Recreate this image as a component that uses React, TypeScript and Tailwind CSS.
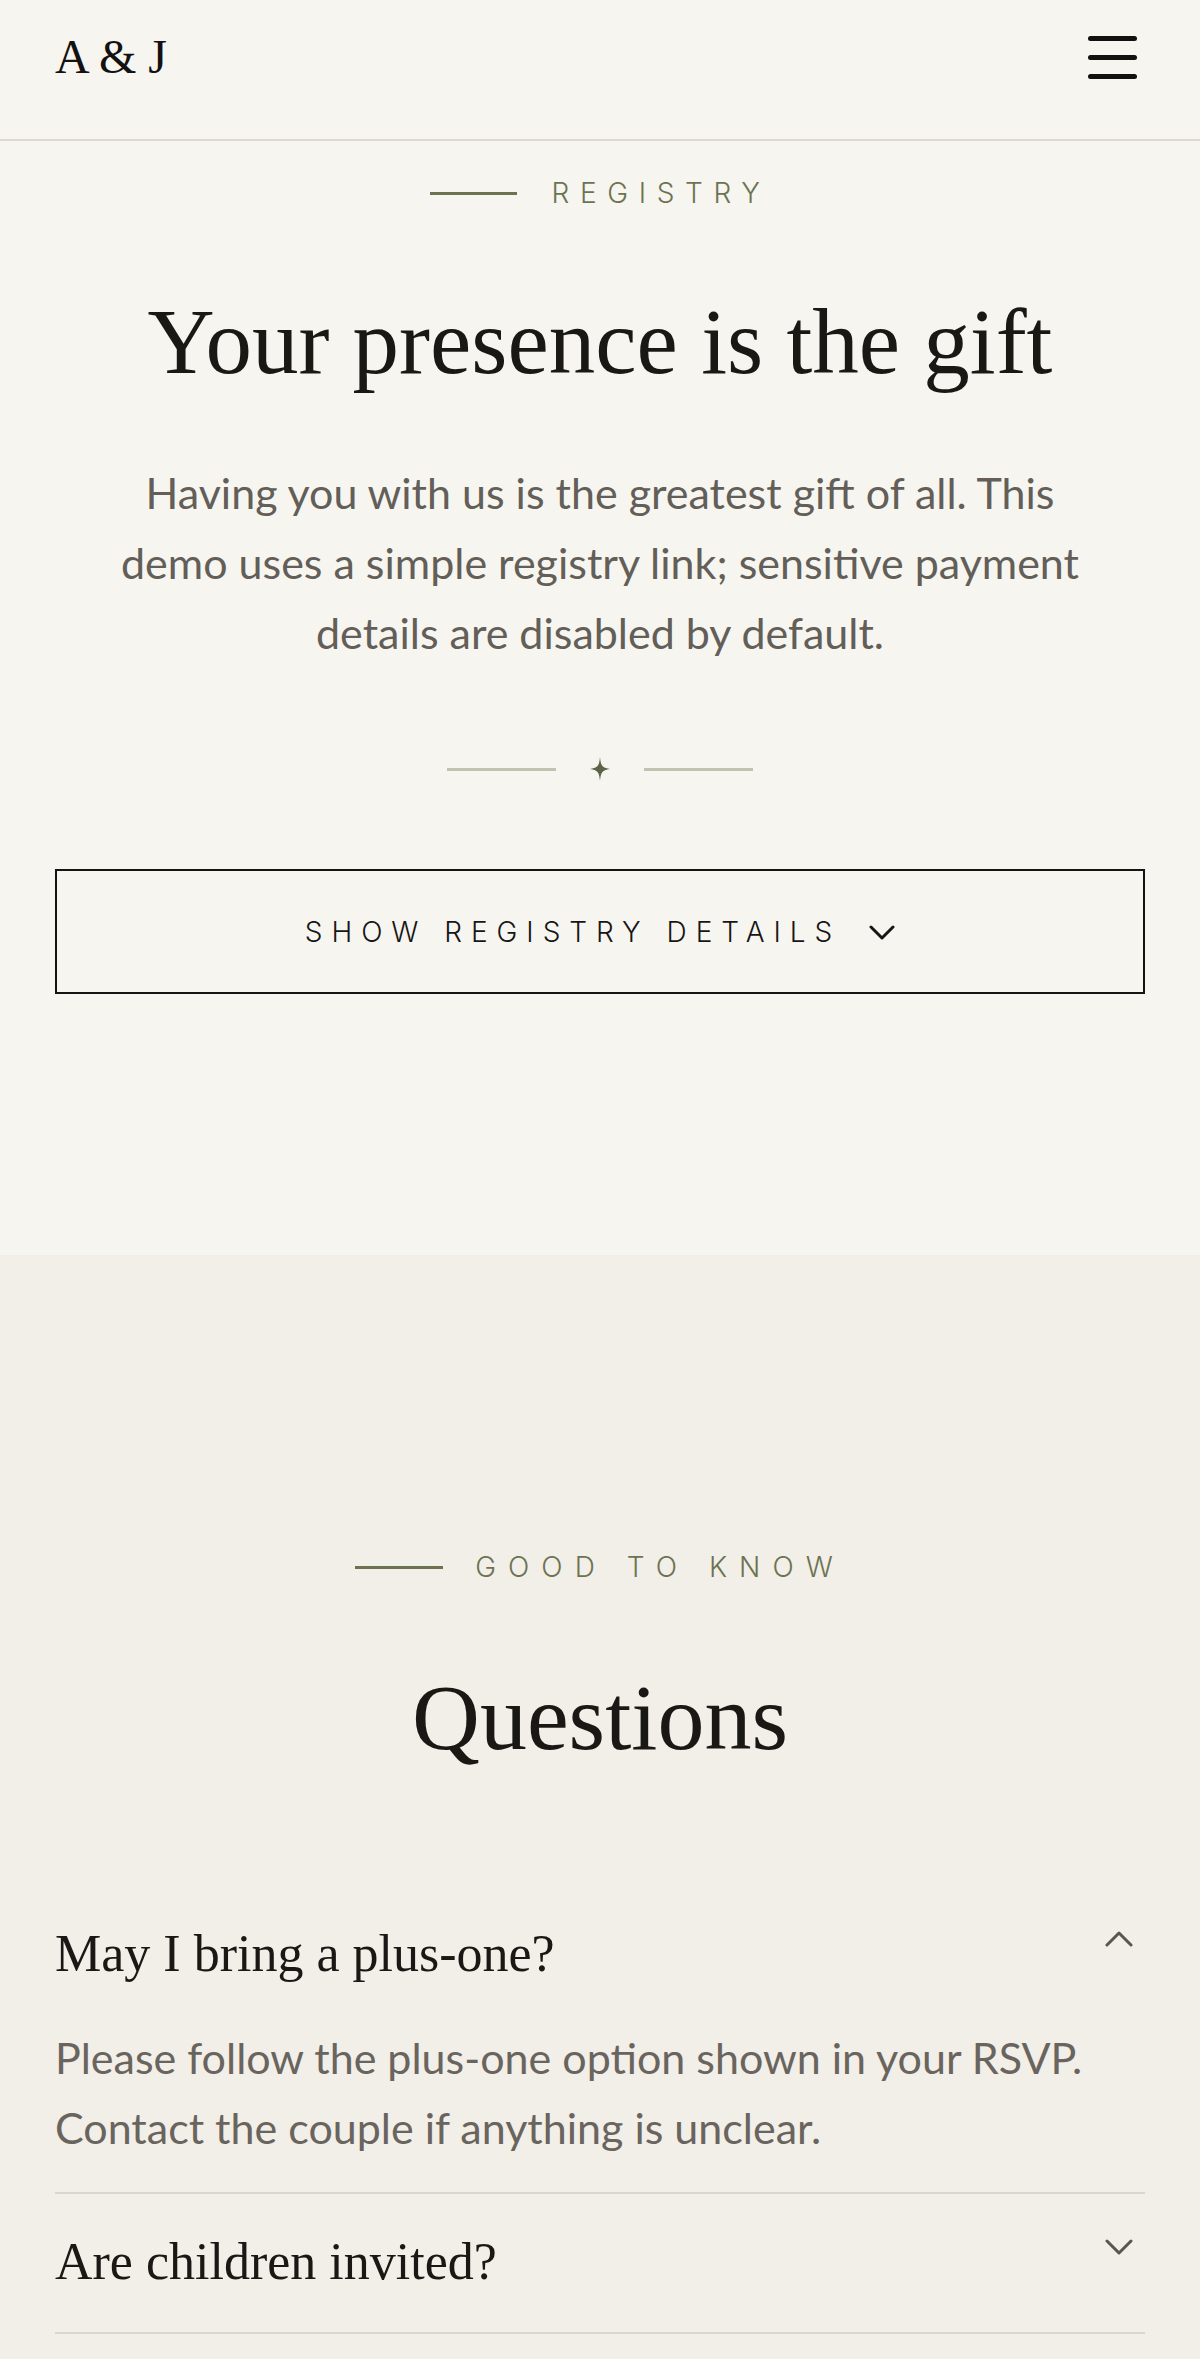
import React, { useState } from 'react';

interface FaqItem {
  question: string;
  answer: string;
}

const faqs: FaqItem[] = [
  {
    question: 'May I bring a plus-one?',
    answer: 'Please follow the plus-one option shown in your RSVP. Contact the couple if anything is unclear.'
  },
  {
    question: 'Are children invited?',
    answer: 'Please check your invitation for the names included in your party.'
  }
];

function Eyebrow({ label, lineWidth, gap, tracking }: { label: string; lineWidth: string; gap: string; tracking: string }) {
  return (
    <div className={`flex items-center justify-center ${gap}`}>
      <span className={`block h-[3px] ${lineWidth} bg-[#6c7351]`} />
      <span className={`font-['Inter',sans-serif] text-[28px] font-light leading-none ${tracking} text-[#6c7351]`}>
        {label}
      </span>
    </div>
  );
}

function Chevron({ up, className }: { up?: boolean; className?: string }) {
  return (
    <svg width="28" height="16" viewBox="0 0 28 16" fill="none" className={className}>
      <path
        d={up ? 'M2 14L14 2l12 12' : 'M2 2l12 12L26 2'}
        stroke="currentColor"
        strokeWidth="3"
        strokeLinecap="round"
        strokeLinejoin="round"
      />
    </svg>
  );
}

export default function App() {
  const [open, setOpen] = useState<number | null>(0);
  const [showDetails, setShowDetails] = useState(false);

  return (
    <div className="min-h-screen bg-[#f2eee8]">
      {/* Header */}
      <header className="h-[141px] border-b-2 border-[#dcd8cf] bg-[#f6f5f0] px-[55px]">
        <div className="flex h-[114px] items-center justify-between">
          <span className="font-['Liberation_Serif',serif] text-[48px] leading-none text-[#141210]">A &amp; J</span>
          <button aria-label="Menu" className="mr-[8px] flex w-[49px] flex-col gap-[14px]">
            <span className="block h-[5px] w-full rounded-full bg-[#111]" />
            <span className="block h-[5px] w-full rounded-full bg-[#111]" />
            <span className="block h-[5px] w-full rounded-full bg-[#111]" />
          </button>
        </div>
      </header>

      {/* Registry */}
      <section className="bg-[#f6f5f0] px-[55px] pt-[38px] pb-[261px]">
        <Eyebrow label="REGISTRY" lineWidth="w-[87px]" gap="gap-[35px]" tracking="tracking-[0.38em]" />
        <h2 className="mt-[88px] text-center font-['Liberation_Serif',serif] text-[93px] font-normal leading-none text-[#1a1815]">
          Your presence is the gift
        </h2>
        <p className="mx-auto mt-[70px] max-w-[990px] text-center font-['Lato',sans-serif] text-[43px] leading-[70px] text-[#635e58]">
          Having you with us is the greatest gift of all. This demo uses a simple registry link; sensitive payment
          details are disabled by default.
        </p>

        {/* Ornament */}
        <div className="mt-[89px] flex items-center justify-center gap-[34px]">
          <span className="block h-[3px] w-[109px] bg-[#c0c4ae]" />
          <svg width="20" height="24" viewBox="0 0 20 24" className="text-[#5b6445]">
            <path d="M10 0C10.8 8 11.5 10.8 20 12C11.5 13.2 10.8 16 10 24C9.2 16 8.5 13.2 0 12C8.5 10.8 9.2 8 10 0Z" fill="currentColor" />
          </svg>
          <span className="block h-[3px] w-[109px] bg-[#c0c4ae]" />
        </div>

        <button
          onClick={() => setShowDetails(!showDetails)}
          className="mt-[88px] flex h-[125px] w-full items-center justify-center gap-[28px] border-2 border-[#141414] text-[#161616]"
        >
          <span className="font-['Inter',sans-serif] text-[28px] font-light leading-none tracking-[0.32em]">
            SHOW REGISTRY DETAILS
          </span>
          <svg width="26" height="16" viewBox="0 0 26 16" fill="none">
            <path
              d={showDetails ? 'M2 13L13 2l11 11' : 'M2 3l11 11L24 3'}
              stroke="currentColor"
              strokeWidth="3"
              strokeLinecap="round"
              strokeLinejoin="round"
            />
          </svg>
        </button>
      </section>

      {/* FAQ */}
      <section className="bg-[#f2eee8] px-[55px] pt-[298px] pb-[80px]">
        <Eyebrow label="GOOD TO KNOW" lineWidth="w-[88px]" gap="gap-[32px]" tracking="tracking-[0.43em]" />
        <h2 className="mt-[89px] text-center font-['Liberation_Serif',serif] text-[94px] font-normal leading-none text-[#1a1815]">
          Questions
        </h2>

        <div className="mt-[122px]">
          {faqs.map((item, i) => (
            <div key={item.question} className="border-b-2 border-[#dad5cd]">
              <button
                onClick={() => setOpen(open === i ? null : i)}
                className={`flex w-full items-start justify-between pt-[42px] text-left ${open === i ? '' : 'pb-[44px]'}`}
              >
                <span className="font-['Liberation_Serif',serif] text-[52px] leading-none text-[#1a1815]">
                  {item.question}
                </span>
                <Chevron up={open === i} className="mt-[3px] mr-[12px] text-[#5a554f]" />
              </button>
              {open === i && (
                <p className="mt-[43px] pb-[29px] font-['Lato',sans-serif] text-[43px] leading-[70px] text-[#6a645e]">
                  {item.answer}
                </p>
              )}
            </div>
          ))}
        </div>
      </section>
    </div>
  );
}
